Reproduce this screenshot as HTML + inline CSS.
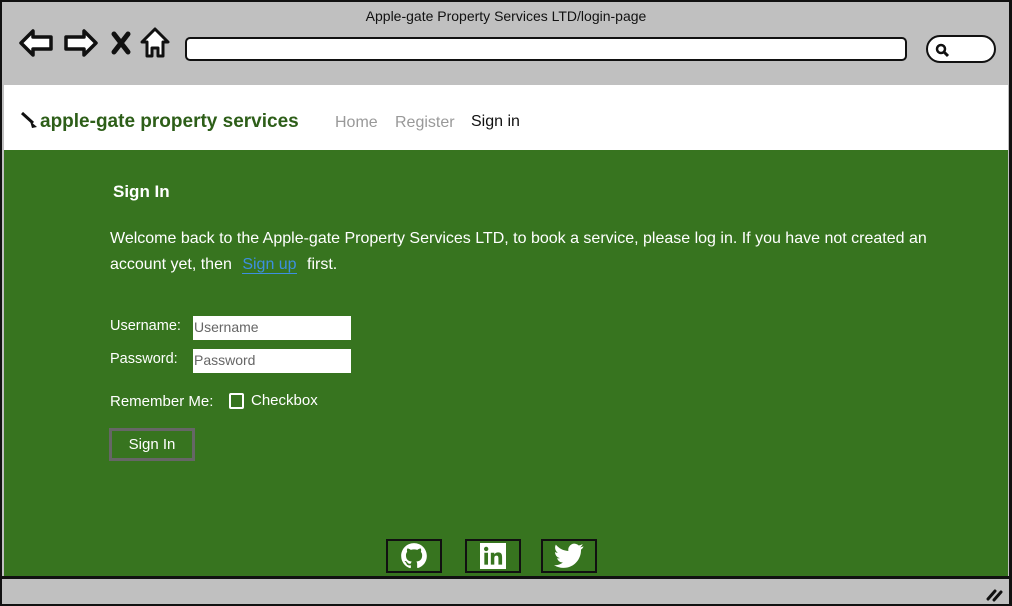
<!DOCTYPE html>
<html><head><meta charset="utf-8"><style>
*{margin:0;padding:0;box-sizing:border-box}
body{width:1012px;height:606px;overflow:hidden;background:#c0c0c0;font-family:"Liberation Sans",sans-serif;position:relative}
.frame{position:absolute;left:0;top:0;width:1012px;height:606px;border:2px solid #111;border-right-width:3px}
.abs{position:absolute}
.title{left:0;width:1012px;top:8px;text-align:center;font-size:14px;color:#111}
.url{left:185px;top:37px;width:722px;height:24px;background:#fff;border:2.5px solid #111;border-radius:5px}
.search{left:926px;top:35px;width:70px;height:28px;background:#fff;border:2.5px solid #111;border-radius:14px}
.nav{left:4px;top:85px;width:1004px;height:65px;background:#fff}
.green{left:4px;top:150px;width:1004px;height:427px;background:#37741f;color:#fff}
.bottom{left:0;top:576px;width:1012px;height:3px;background:#111}
.soc{position:absolute;top:389px;width:56px;height:34px;border:2.5px solid #111;display:flex;align-items:center;justify-content:center}
</style></head><body>
<div class="abs title">Apple-gate Property Services LTD/login-page</div>
<svg class="abs" style="left:18px;top:26px" width="160" height="36" viewBox="0 0 160 36">
<path d="M3 17 L15 5 L15 11 L33 11 L33 23 L15 23 L15 29 Z" fill="#fff" stroke="#111" stroke-width="3.5" stroke-linejoin="round"/>
<path d="M78 17 L66 5 L66 11 L48 11 L48 23 L66 23 L66 29 Z" fill="#fff" stroke="#111" stroke-width="3.5" stroke-linejoin="round"/>
<path d="M96 8 L110 26 M110 8 L96 26" stroke="#111" stroke-width="5" stroke-linecap="round"/>
<path d="M137 3 L150 16 L145 16 L145 30 L140 30 L140 22 L134 22 L134 30 L129 30 L129 16 L124 16 Z" fill="#fff" stroke="#111" stroke-width="3" stroke-linejoin="round"/>
</svg>
<div class="abs url"></div>
<div class="abs search"><svg width="20" height="20" style="position:absolute;left:5px;top:3px"><circle cx="8" cy="9" r="4" fill="none" stroke="#111" stroke-width="2.5"/><path d="M11 12 L15 16" stroke="#111" stroke-width="3"/></svg></div>
<div class="abs nav">
 <svg class="abs" style="left:16px;top:26px" width="20" height="18"><path d="M2 2 L13 12" stroke="#111" stroke-width="3"/><path d="M10 10 L17 16 L12 17 Z" fill="#111"/></svg>
 <div class="abs" style="left:36px;top:26px;font-size:19px;font-weight:bold;color:#2d5e18">apple-gate property services</div>
 <div class="abs" style="left:331px;top:29px;font-size:16px;color:#999">Home</div>
 <div class="abs" style="left:391px;top:29px;font-size:16px;color:#999">Register</div>
 <div class="abs" style="left:467px;top:28px;font-size:16px;color:#111">Sign in</div>
</div>
<div class="abs green">
 <div class="abs" style="left:109px;top:32px;font-size:17px;font-weight:bold">Sign In</div>
 <div class="abs" style="left:106px;top:76px;width:870px;font-size:16px;line-height:26px">Welcome back to the Apple-gate Property Services LTD, to book a service, please log in. If you have not created an account yet, then <span style="color:#3d8fe0;border-bottom:1px solid #3d8fe0;margin:0 6px">Sign up</span> first.</div>
 <div class="abs" style="left:106px;top:168px;font-size:14.5px">Username:</div>
 <div class="abs" style="left:189px;top:166px;width:158px;height:24px;background:#fff;color:#666;font-size:14px;padding:3px 1px">Username</div>
 <div class="abs" style="left:106px;top:201px;font-size:14.5px">Password:</div>
 <div class="abs" style="left:189px;top:199px;width:158px;height:24px;background:#fff;color:#666;font-size:14px;padding:3px 1px">Password</div>
 <div class="abs" style="left:106px;top:243px;font-size:15px">Remember Me:</div>
 <div class="abs" style="left:225px;top:243px;width:15px;height:16px;border:2px solid #fff;border-radius:2px"></div>
 <div class="abs" style="left:247px;top:242px;font-size:15px">Checkbox</div>
 <div class="abs" style="left:105px;top:278px;width:86px;height:33px;border:3px solid #666;font-size:15px;text-align:center;line-height:27px">Sign In</div>
 <div class="soc" style="left:382px"><svg width="28" height="28" viewBox="0 0 24 24"><path fill="#fff" d="M12 1C5.9 1 1 5.9 1 12c0 4.9 3.2 9 7.5 10.4.6.1.8-.2.8-.5v-2c-3.1.7-3.7-1.3-3.7-1.3-.5-1.3-1.2-1.6-1.2-1.6-1-.7.1-.7.1-.7 1.1.1 1.7 1.1 1.7 1.1 1 1.7 2.6 1.2 3.2.9.1-.7.4-1.2.7-1.5-2.4-.3-5-1.2-5-5.4 0-1.2.4-2.2 1.1-2.9-.1-.3-.5-1.4.1-2.900 0 0 .9-.3 3 1.1a10 10 0 0 1 5.5 0c2.1-1.4 3-1.1 3-1.1.6 1.5.2 2.6.1 2.9.7.8 1.1 1.7 1.1 2.9 0 4.2-2.6 5.1-5 5.4.4.3.7 1 .7 2v3c0 .3.2.6.8.5C19.8 21 23 16.9 23 12 23 5.9 18.1 1 12 1z"/></svg></div>
 <div class="soc" style="left:461px"><svg width="26" height="26" viewBox="0 0 24 24"><rect width="24" height="24" fill="#fff"/><rect x="4" y="9" width="3.4" height="11" fill="#37741f"/><circle cx="5.7" cy="5.5" r="2" fill="#37741f"/><path d="M10 9h3.2v1.6c.6-1 1.8-1.9 3.6-1.9 3 0 3.6 2 3.6 4.6V20H17v-5.6c0-1.4-.1-2.8-1.8-2.8s-2 1.3-2 2.7V20H10z" fill="#37741f"/></svg></div>
 <div class="soc" style="left:537px"><svg width="30" height="26" viewBox="0 0 24 20"><path fill="#fff" d="M23.6 2.3c-.9.4-1.8.6-2.8.8 1-.6 1.8-1.5 2.1-2.7-.9.6-2 1-3.1 1.2A4.9 4.9 0 0 0 11.5 6C7.4 5.8 3.9 3.9 1.5.9c-1.3 2.3-.5 5 1.5 6.5-.8 0-1.5-.2-2.2-.6 0 2.4 1.7 4.4 3.9 4.9-.7.2-1.5.2-2.2.1.6 2 2.4 3.4 4.6 3.4A9.9 9.9 0 0 1 0 17.3 13.9 13.9 0 0 0 7.5 19.5c9.1 0 14.1-7.5 14.1-14v-.6c1-.7 1.8-1.6 2-2.6z"/></svg></div>
</div>
<div class="abs bottom"></div>
<svg class="abs" style="left:985px;top:586px" width="20" height="16"><path d="M3 13 L10 5 M9 14 L16 6" stroke="#111" stroke-width="3" stroke-linecap="round"/></svg>
<div class="frame"></div>
</body></html>
